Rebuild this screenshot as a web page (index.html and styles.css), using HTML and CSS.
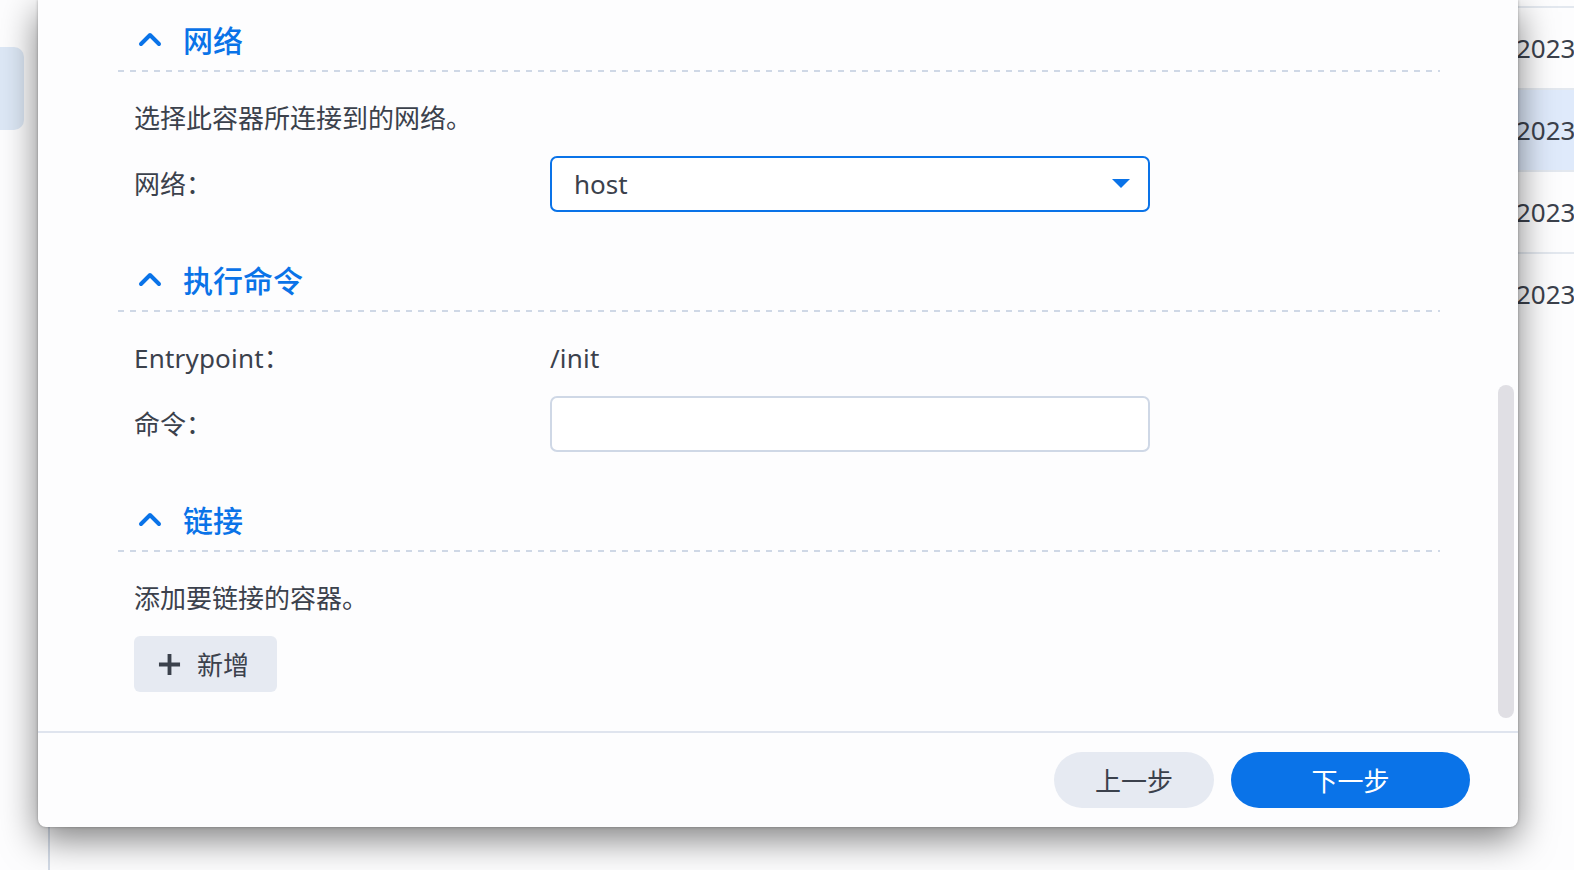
FILE: index.html
```html
<!DOCTYPE html>
<html lang="zh-CN">
  <head>
    <meta charset="UTF-8" />
    <title>创建容器 - 网络设置</title>
    <link rel="stylesheet" href="styles.css">
  </head>
  <body>
    <div class="desktop">
      <aside class="sidebar">
        <div class="nav-item active"></div>
      </aside>
      <main class="list">
        <div class="row"><span class="cell-name">homeassistant</span><span class="cell-date">2023-06-12 21:40:18</span></div>
        <div class="row selected"><span class="cell-name">jellyfin</span><span class="cell-date">2023-06-10 09:12:55</span></div>
        <div class="row"><span class="cell-name">qbittorrent</span><span class="cell-date">2023-05-28 17:03:41</span></div>
        <div class="row"><span class="cell-name">nginx</span><span class="cell-date">2023-05-02 08:26:07</span></div>
      </main>
    </div>

    <div class="dialog">
      <div class="dialog-body">
        <section class="group">
          <div class="group-head">
            <svg class="chevron" viewBox="0 0 24 16"><path d="M3 13 L12 4 L21 13" /></svg>
            <span>网络</span>
          </div>
          <div class="group-body">
            <p class="hint">选择此容器所连接到的网络。</p>
            <div class="field">
              <label>网络：</label>
              <div class="select">
                <span>host</span>
                <svg class="caret" viewBox="0 0 18 10"><path d="M0 0 H18 L9 9 Z" /></svg>
              </div>
            </div>
          </div>
        </section>

        <section class="group">
          <div class="group-head">
            <svg class="chevron" viewBox="0 0 24 16"><path d="M3 13 L12 4 L21 13" /></svg>
            <span>执行命令</span>
          </div>
          <div class="group-body">
            <div class="field text">
              <label>Entrypoint：</label>
              <span class="value">/init</span>
            </div>
            <div class="field">
              <label>命令：</label>
              <input class="input" type="text" />
            </div>
          </div>
        </section>

        <section class="group">
          <div class="group-head">
            <svg class="chevron" viewBox="0 0 24 16"><path d="M3 13 L12 4 L21 13" /></svg>
            <span>链接</span>
          </div>
          <div class="group-body">
            <p class="hint">添加要链接的容器。</p>
            <div>
              <button class="btn-add">
                <svg class="plus" viewBox="0 0 24 24"><path d="M12 1 V23 M1 12 H23" /></svg>
                <span>新增</span>
              </button>
            </div>
          </div>
        </section>

        <div class="scrollbar"></div>
      </div>
      <div class="dialog-foot">
        <button class="btn prev">上一步</button>
        <button class="btn next">下一步</button>
      </div>
    </div>
  </body>
</html>
```

FILE: styles.css
```css
* {
  margin: 0;
  padding: 0;
  box-sizing: border-box;
}
body {
  width: 1574px;
  height: 870px;
  overflow: hidden;
  position: relative;
  background-color: #fdfdfe;
  font-family: "Noto Sans", "Noto Sans CJK SC", sans-serif;
  color: #3b414c;
}

/* background window */
.desktop {
  display: flex;
  height: 100%;
}
.sidebar {
  width: 48px;
  flex: none;
  padding-top: 47px;
}
.nav-item {
  width: 24px;
  height: 83px;
  border-radius: 0 10px 10px 0;
}
.nav-item.active {
  background-color: #dde8f6;
}
.list {
  flex: 1;
  border-left: 2px solid #d3dbe7;
  padding-top: 6px;
}
.row {
  display: flex;
  align-items: center;
  height: 82px;
  border-top: 2px solid #e3e8ef;
  font-size: 26px;
  white-space: nowrap;
}
.row.selected {
  background-color: #dfeafb;
}
.cell-name {
  width: 1466px;
  flex: none;
  padding-left: 40px;
}

/* dialog window */
.dialog {
  position: absolute;
  left: 38px;
  top: 0;
  width: 1480px;
  height: 827px;
  background-color: #fdfdfe;
  border-radius: 0 0 8px 8px;
  box-shadow: 0 0 3px rgba(0, 0, 0, 0.3), 0 12px 36px rgba(0, 0, 0, 0.5);
  display: flex;
  flex-direction: column;
}
.dialog-body {
  flex: 1;
  position: relative;
  overflow: hidden;
  padding: 10px 78px 0 80px;
}
.group + .group {
  margin-top: 38px;
}
.group-head {
  height: 62px;
  padding: 0 0 4px 20px;
  display: flex;
  align-items: center;
  gap: 21px;
  font-size: 30px;
  font-weight: 500;
  color: #0a73e8;
  background: repeating-linear-gradient(to right, #cfd8e6 0 6px, transparent 6px 12px) left bottom / 100% 2px no-repeat;
}
.chevron {
  width: 24px;
  height: 16px;
  fill: none;
  stroke: #0a73e8;
  stroke-width: 4;
  stroke-linecap: round;
  stroke-linejoin: round;
}
.group-body {
  padding: 28px 0 0 16px;
  display: flex;
  flex-direction: column;
  gap: 20px;
  font-size: 26px;
  line-height: 36px;
}
.field {
  display: flex;
  align-items: center;
}
.field label {
  width: 416px;
  flex: none;
}
.field.text {
  letter-spacing: 0.2px;
}
.select,
.input {
  width: 600px;
  height: 56px;
  border-radius: 7px;
  background-color: #fff;
  font-family: inherit;
  font-size: 26px;
  color: #3b414c;
}
.select {
  border: 2px solid #0a73e8;
  display: flex;
  align-items: center;
  justify-content: space-between;
  padding: 0 18px 0 22px;
}
.caret {
  width: 18px;
  height: 10px;
  fill: #0a73e8;
}
.input {
  border: 2px solid #cfd8e6;
  padding: 0 20px;
  outline: none;
}
.btn-add {
  display: inline-flex;
  align-items: center;
  gap: 16px;
  height: 56px;
  padding: 0 28px 0 24px;
  border: none;
  border-radius: 6px;
  background-color: #e6eaf2;
  font-family: inherit;
  font-size: 26px;
  color: #3b414c;
}
.plus {
  width: 23px;
  height: 23px;
  stroke: #3b414c;
  stroke-width: 4;
}
.scrollbar {
  position: absolute;
  right: 4px;
  top: 385px;
  width: 16px;
  height: 333px;
  border-radius: 8px;
  background-color: #e0dfe4;
}

.dialog-foot {
  height: 96px;
  flex: none;
  border-top: 2px solid #dfe4ee;
  display: flex;
  align-items: center;
  justify-content: flex-end;
  gap: 17px;
  padding-right: 48px;
}
.btn {
  height: 56px;
  border: none;
  border-radius: 28px;
  font-family: inherit;
  font-size: 26px;
}
.btn.prev {
  width: 160px;
  background-color: #e6eaf2;
  color: #3b414c;
}
.btn.next {
  width: 239px;
  background-color: #0a73e8;
  color: #fff;
}
```
